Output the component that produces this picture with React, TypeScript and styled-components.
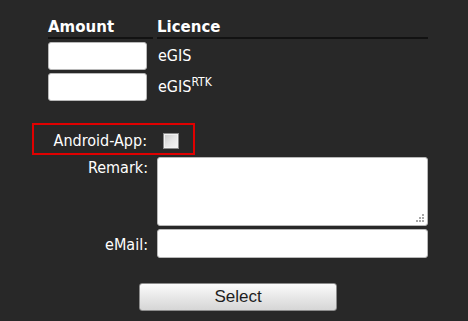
import React from 'react';
import styled, { createGlobalStyle } from 'styled-components';

const GlobalStyle = createGlobalStyle`
  html, body {
    margin: 0;
    background: #282828;
  }
  body {
    font-family: "DejaVu Sans Condensed", "DejaVu Sans", Verdana, sans-serif;
    color: #ffffff;
  }
`;

const Page = styled.div`
  width: 468px;
  height: 321px;
  background: #282828;
  overflow: hidden;
`;

const Main = styled.div`
  margin-left: 48px;
  width: 380px;
  padding-top: 18px;
`;

const LicenceGrid = styled.div`
  display: grid;
  grid-template-columns: 105px 271px;
  column-gap: 4px;
  row-gap: 3px;
`;

const HeaderCell = styled.div`
  font-family: "DejaVu Sans", Verdana, sans-serif;
  font-weight: bold;
  font-size: 15px;
  line-height: 18px;
  padding-bottom: 1px;
  border-bottom: 2px solid #121212;
`;

const AmountInput = styled.input`
  box-sizing: border-box;
  width: 99px;
  height: 28px;
  margin: 0;
  border: 1px solid #b8b8b8;
  border-radius: 3px;
  background: #ffffff;
`;

const LicenceName = styled.div`
  font-size: 16px;
  line-height: 28px;
  padding-left: 1px;

  sup {
    font-size: 12px;
    line-height: 0;
    vertical-align: 6px;
  }
`;

const Highlight = styled.div`
  box-sizing: border-box;
  margin: 22px 0 0 -16px;
  width: 163px;
  height: 32px;
  border: 2px solid #e00000;
  padding: 4px 14px 0 0;
  display: flex;
  align-items: center;
  justify-content: flex-end;
`;

const Label = styled.label<{ $top?: number }>`
  font-size: 16px;
  line-height: 18px;
  text-align: right;
  padding-top: ${p => p.$top ?? 0}px;
`;

const Checkbox = styled.input`
  appearance: none;
  box-sizing: border-box;
  width: 16px;
  height: 16px;
  margin: 0 0 0 16px;
  border: 1px solid #8a8a8a;
  background: linear-gradient(135deg, #c8c8c8 0%, #e6e6e6 50%, #f6f6f6 100%);
  box-shadow: inset 0 0 0 1px #f2f2f2;
`;

const FormGrid = styled.div`
  display: grid;
  grid-template-columns: 100px 271px;
  column-gap: 9px;
  row-gap: 3px;
  margin-top: 2px;
`;

const AreaWrap = styled.div`
  position: relative;
  height: 69px;
`;

const Remark = styled.textarea`
  box-sizing: border-box;
  display: block;
  width: 100%;
  height: 69px;
  margin: 0;
  resize: none;
  border: 1px solid #b8b8b8;
  border-radius: 3px;
  background: #ffffff;
`;

const Grip = styled.svg`
  position: absolute;
  right: 4px;
  bottom: 4px;
`;

const TextInput = styled.input`
  box-sizing: border-box;
  width: 100%;
  height: 29px;
  margin: 0;
  border: 1px solid #b8b8b8;
  border-radius: 3px;
  background: #ffffff;
`;

const ButtonRow = styled.div`
  display: flex;
  justify-content: center;
  margin-top: 25px;
`;

const SelectButton = styled.button`
  box-sizing: border-box;
  width: 198px;
  height: 28px;
  border: 1px solid #8c8c8c;
  border-radius: 3px;
  background: linear-gradient(#fbfbfb, #e6e6e6 55%, #d6d6d6);
  font-family: "Liberation Sans", Arial, sans-serif;
  font-size: 17px;
  color: #1e1e1e;
  padding: 0;
`;

const App: React.FC = () => {
  return (
    <Page>
      <GlobalStyle />
      <Main>
        <LicenceGrid>
          <HeaderCell>Amount</HeaderCell>
          <HeaderCell>Licence</HeaderCell>
          <AmountInput type="text" />
          <LicenceName>eGIS</LicenceName>
          <AmountInput type="text" />
          <LicenceName>
            eGIS<sup>RTK</sup>
          </LicenceName>
        </LicenceGrid>

        <Highlight>
          <Label>Android-App:</Label>
          <Checkbox type="checkbox" />
        </Highlight>

        <FormGrid>
          <Label $top={2}>Remark:</Label>
          <AreaWrap>
            <Remark />
            <Grip width="9" height="9" viewBox="0 0 9 9">
              {[
                [7, 1],
                [4, 4],
                [7, 4],
                [1, 7],
                [4, 7],
                [7, 7],
              ].map(([x, y]) => (
                <rect key={`${x}-${y}`} x={x} y={y} width="2" height="2" fill="#a8a8a8" />
              ))}
            </Grip>
          </AreaWrap>
          <Label $top={7}>eMail:</Label>
          <TextInput type="text" />
        </FormGrid>

        <ButtonRow>
          <SelectButton type="button">Select</SelectButton>
        </ButtonRow>
      </Main>
    </Page>
  );
};

export default App;
